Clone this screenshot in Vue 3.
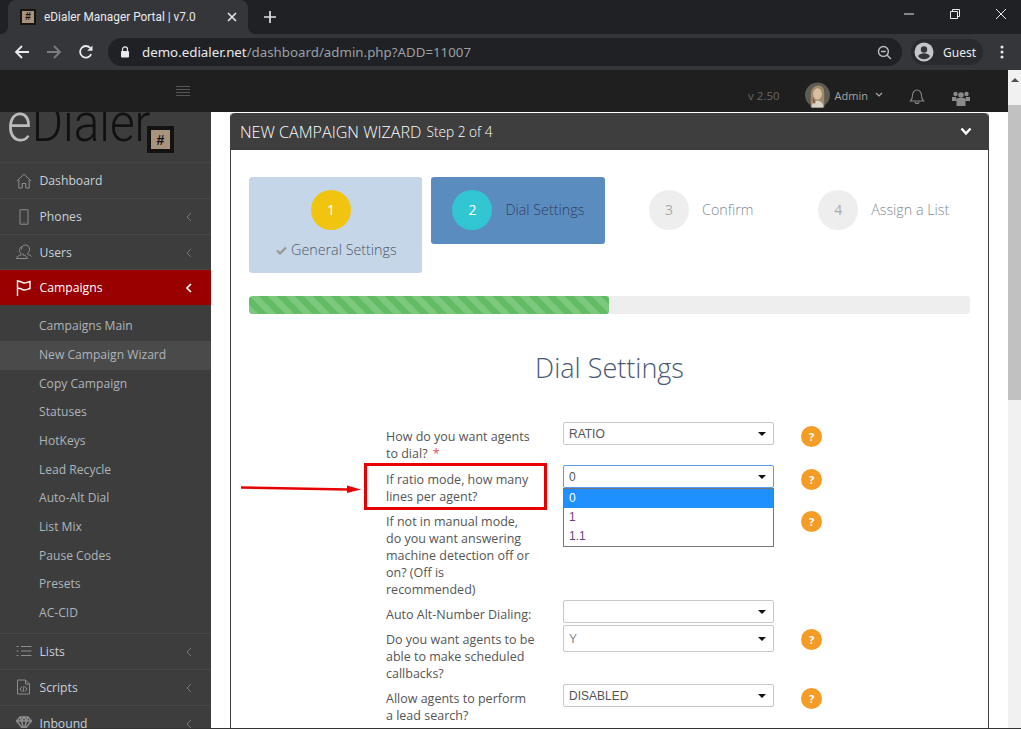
<script setup>
const topItems = [
  { label: 'Dashboard', icon: 'home' },
  { label: 'Phones', icon: 'phone', arrow: true },
  { label: 'Users', icon: 'users', arrow: true, short: true },
];
const subItems = [
  'Campaigns Main',
  'New Campaign Wizard',
  'Copy Campaign',
  'Statuses',
  'HotKeys',
  'Lead Recycle',
  'Auto-Alt Dial',
  'List Mix',
  'Pause Codes',
  'Presets',
  'AC-CID',
];
const bottomItems = [
  { label: 'Lists', icon: 'list' },
  { label: 'Scripts', icon: 'script' },
  { label: 'Inbound', icon: 'diamond' },
];
const steps = [
  { n: 1, label: 'General Settings', state: 'done' },
  { n: 2, label: 'Dial Settings', state: 'active' },
  { n: 3, label: 'Confirm', state: '' },
  { n: 4, label: 'Assign a List', state: '' },
];
const rows = [
  { label: 'How do you want agents to dial?', required: true, value: 'RATIO', help: true, cls: 'h23' },
  { label: 'If ratio mode, how many lines per agent?', value: '0', help: true, open: true, cls: 'h23' },
  { label: 'If not in manual mode, do you want answering machine detection off or on? (Off is recommended)', value: null, help: true },
  { label: 'Auto Alt-Number Dialing:', value: '', cls: 'h23' },
  { label: 'Do you want agents to be able to make scheduled callbacks?', value: 'Y', help: true, cls: 'h27 light' },
  { label: 'Allow agents to perform a lead search?', value: 'DISABLED', help: true, cls: 'h23' },
];
</script>

<template>
  <div class="page">
    <!-- barre navigateur -->
    <div class="tabstrip">
      <div class="tab">
        <span class="favicon">#</span>
        <span class="tab-title">eDialer Manager Portal | v7.0</span>
        <svg class="tab-x" width="10" height="10" viewBox="0 0 10 10"><path d="M1 1l8 8M9 1l-8 8" stroke="#e8eaed" stroke-width="1.6" /></svg>
      </div>
      <svg class="tab-plus" width="14" height="14" viewBox="0 0 14 14"><path d="M7 1v12M1 7h12" stroke="#dee1e6" stroke-width="1.7" /></svg>
      <div class="win-btns">
        <svg width="12" height="12" viewBox="0 0 12 12"><path d="M1 6h10" stroke="#e8eaed" stroke-width="1" /></svg>
        <svg width="12" height="12" viewBox="0 0 12 12"><path d="M1.5 3.5h7v7h-7zM3.5 3.5v-2h7v7h-2" fill="none" stroke="#e8eaed" stroke-width="1" /></svg>
        <svg width="12" height="12" viewBox="0 0 12 12"><path d="M1 1l10 10M11 1L1 11" stroke="#e8eaed" stroke-width="1" /></svg>
      </div>
    </div>
    <div class="toolbar">
      <svg class="tool" width="16" height="16" viewBox="0 0 16 16"><path d="M15 8H2M8 2L2 8l6 6" fill="none" stroke="#e8eaed" stroke-width="1.8" /></svg>
      <svg class="tool" width="16" height="16" viewBox="0 0 16 16"><path d="M1 8h13M8 2l6 6-6 6" fill="none" stroke="#7b7d80" stroke-width="1.8" /></svg>
      <svg class="tool" width="16" height="16" viewBox="0 0 16 16"><path d="M13.2 10.2A5.8 5.8 0 1 1 12.3 4" fill="none" stroke="#e8eaed" stroke-width="1.8" /><path d="M14.5 1.5v5.3H9.2z" fill="#e8eaed" /></svg>
      <div class="urlbar">
        <svg width="10" height="12" viewBox="0 0 10 12"><path d="M2.5 5V3.4a2.5 2.5 0 0 1 5 0V5" fill="none" stroke="#e8eaed" stroke-width="1.2" /><rect x="1" y="5" width="8" height="6.5" rx="1" fill="#e8eaed" /></svg>
        <span class="url"><b>demo.edialer.net</b>/dashboard/admin.php?ADD=11007</span>
        <svg class="zoom-ic" width="15" height="15" viewBox="0 0 14 14"><circle cx="6" cy="6" r="4.6" fill="none" stroke="#bdc1c6" stroke-width="1.3" /><path d="M9.5 9.5L13 13M3.8 6h4.4" stroke="#bdc1c6" stroke-width="1.3" /></svg>
      </div>
      <div class="guest">
        <svg width="20" height="20" viewBox="0 0 20 20"><circle cx="10" cy="10" r="9.5" fill="#c4c7cb" /><circle cx="10" cy="7.5" r="3.2" fill="#35363a" /><path d="M4 14.2c1.2-2.2 3.6-3 6-3s4.8.8 6 3a7.5 7.5 0 0 1-12 0z" fill="#35363a" /></svg>
        <span>Guest</span>
      </div>
      <svg class="dots" width="4" height="14" viewBox="0 0 4 14"><circle cx="2" cy="2" r="1.5" fill="#e8eaed" /><circle cx="2" cy="7" r="1.5" fill="#e8eaed" /><circle cx="2" cy="12" r="1.5" fill="#e8eaed" /></svg>
    </div>

    <div class="viewport">
      <div class="site">
        <!-- barre du haut -->
        <div class="topbar">
          <div class="burger"><i></i><i></i><i></i><i></i></div>
          <span class="version">v 2.50</span>
          <svg class="avatar" width="25" height="26" viewBox="0 0 26 26">
            <circle cx="13" cy="13" r="13" fill="#5e5a54" />
            <path d="M6 26V12c0-6 4-9 8-9s6 3 6 8v15z" fill="#a08a6c" />
            <ellipse cx="13" cy="12" rx="4.5" ry="6" fill="#d9bfa2" />
            <path d="M7 26c0-5 3-7 6-7s6 2 6 7z" fill="#d8d3c4" />
            <path d="M8 15l3 6-2 1z" fill="#7a4a36" />
          </svg>
          <span class="admin">Admin</span>
          <svg class="admin-caret" width="8" height="6" viewBox="0 0 8 6"><path d="M1 1l3 3 3-3" fill="none" stroke="#aaa" stroke-width="1.2" /></svg>
          <svg class="bell" width="16" height="18" viewBox="0 0 16 18"><path d="M1.5 14c1.5-1.5 2-2.5 2-5.500 0-3 2-5.500 4.500-5.500s4.500 2.500 4.500 5.500c0 3 .5 4 2 5.500z" fill="none" stroke="#888" stroke-width="1.1" /><path d="M6 14.500a2 2 0 0 0 4 0" fill="none" stroke="#888" stroke-width="1.1" /></svg>
          <svg class="group" width="18" height="16" viewBox="0 0 18 16"><circle cx="9" cy="5" r="2.800" fill="#8a8a8a" /><circle cx="3.500" cy="4" r="2.200" fill="#8a8a8a" /><circle cx="14.500" cy="4" r="2.200" fill="#8a8a8a" /><path d="M0 7h4l1 4H0zM18 7h-4l-1 4h5z" fill="#8a8a8a" /><path d="M4.500 16V9.500c0-1 1-1.500 2-1.500h5c1 0 2 .5 2 1.500V16z" fill="#8a8a8a" /></svg>
        </div>

        <div class="columns">
          <!-- menu latéral -->
          <aside class="sidebar">
            <div class="logo">
              <span class="logo-text"><em>e</em>Dialer</span>
              <span class="logo-box"><span>#</span></span>
            </div>
            <div v-for="item in topItems" :key="item.label" class="nav-item" :class="{ short: item.short }">
              <svg class="nav-ic" width="16" height="16" viewBox="0 0 16 16" fill="none" stroke="#8d8d8d" stroke-width="1">
                <path v-if="item.icon === 'home'" d="M.8 8L8 1.200 15.200 8M2.800 6.500V15h3.400v-4.500h3.600V15h3.400V6.500" />
                <path v-if="item.icon === 'phone'" d="M4 .8h8v14.400H4zM7.500 13.200h1" />
                <path v-if="item.icon === 'users'" d="M5.500 5.500C5.500 3 7 1 9.500 1s4 2 4 4.500c0 1.500-.8 3-1.800 3.700v1.100c1.500.6 3.300 1.200 3.800 2.200M6 2.500C4 3 3.500 5 3.500 6.500c0 1.300.7 2.500 1.500 3v1.500c-2 .5-4.500 1.500-4.500 3.500h11c0-1.800-2-3-4.500-3.500V9.500" />
              </svg>
              <span>{{ item.label }}</span>
              <svg v-if="item.arrow" class="nav-arrow" width="6" height="10" viewBox="0 0 6 10"><path d="M5 1L1 5l4 4" fill="none" stroke="#777" stroke-width="1" /></svg>
            </div>
            <div class="nav-item active">
              <svg class="nav-ic" width="16" height="16" viewBox="0 0 16 16" fill="none" stroke="#fff" stroke-width="1.400"><path d="M1.500 0v16M1.500 1.500c3-1 4.500 1.500 6.500 1.500 2 0 4-1 6-1.500v7c-2 .5-4 1.500-6 1.500S4.500 7.500 1.500 8.500" /></svg>
              <span>Campaigns</span>
              <svg class="nav-arrow" width="6" height="10" viewBox="0 0 6 10"><path d="M5 1L1 5l4 4" fill="none" stroke="#fff" stroke-width="1.600" /></svg>
            </div>
            <div class="submenu">
              <div v-for="(sub, i) in subItems" :key="sub" class="sub-item" :class="{ current: i === 1 }">{{ sub }}</div>
            </div>
            <div v-for="item in bottomItems" :key="item.label" class="nav-item">
              <svg class="nav-ic" width="16" height="16" viewBox="0 0 16 16" fill="none" stroke="#8d8d8d" stroke-width="1">
                <path v-if="item.icon === 'list'" d="M5 3.500h10.500M5 8h10.500M5 12.500h10.500M.5 3.500h2M.5 8h2M.5 12.500h2" />
                <path v-if="item.icon === 'script'" d="M1.500 1h8l4 4v10h-12zM9.500 1v4h4M6 7.500L4 10l2 2.500M9 7.500l2 2.500-2 2.500M8 7l-1 6" />
                <path v-if="item.icon === 'diamond'" stroke-width="1.500" d="M4 2h8l3.500 4L8 15 .5 6zM.5 6h15M5.500 6L8 15l2.500-9M4 2l1.500 4L8 2l2.500 4L12 2" />
              </svg>
              <span>{{ item.label }}</span>
              <svg class="nav-arrow" width="6" height="10" viewBox="0 0 6 10"><path d="M5 1L1 5l4 4" fill="none" stroke="#777" stroke-width="1" /></svg>
            </div>
          </aside>

          <main class="main">
            <div class="panel">
              <div class="panel-head">
                <span class="panel-title">NEW CAMPAIGN WIZARD</span>
                <span class="panel-step">Step 2 of 4</span>
                <svg class="panel-chevron" width="12" height="9" viewBox="0 0 12 9"><path d="M1.500 1.500L6 6.500l4.500-5" fill="none" stroke="#fff" stroke-width="2.500" /></svg>
              </div>
              <div class="panel-body">
                <div class="steps">
                  <div v-for="s in steps" :key="s.n" class="step" :class="s.state">
                    <div class="step-circle">{{ s.n }}</div>
                    <div class="step-label">
                      <svg v-if="s.state === 'done'" width="11" height="9" viewBox="0 0 11 9"><path d="M1 4.500l3 3 6-6" fill="none" stroke="#999" stroke-width="2.400" /></svg>
                      {{ s.label }}
                    </div>
                  </div>
                </div>

                <div class="progress"><div class="progress-fill" :style="{ width: '49.9%' }"></div></div>

                <h2 class="title">Dial Settings</h2>

                <div class="form">
                  <div v-for="row in rows" :key="row.label" class="row">
                    <div class="row-label">
                      {{ row.label }}
                      <span v-if="row.required" class="req">*</span>
                    </div>
                    <div class="row-field">
                      <div v-if="row.value !== null && !row.open" class="select" :class="row.cls">
                        <span>{{ row.value }}</span><i class="caret"></i>
                      </div>
                      <div v-if="row.open" class="select focus" :class="row.cls">
                        <span>{{ row.value }}</span><i class="caret"></i>
                      </div>
                      <div v-if="row.open" class="dropdown">
                        <div class="opt selected">0</div>
                        <div class="opt">1</div>
                        <div class="opt">1.1</div>
                      </div>
                    </div>
                    <div v-if="row.help" class="help">?</div>
                  </div>
                </div>

                <!-- annotations rouges -->
                <div class="red-box"></div>
                <svg class="red-arrow" width="122" height="12" viewBox="0 0 122 12">
                  <path d="M0 4.500L106 6.500" stroke="#e60000" stroke-width="2.500" />
                  <path d="M106 2.500L120 6.500 106 10z" fill="#e60000" />
                </svg>
              </div>
            </div>
          </main>
        </div>
      </div>

      <div class="scrollbar">
        <div class="scroll-up"></div>
        <div class="scroll-thumb"></div>
      </div>
    </div>
    <div class="edge"></div>
  </div>
</template>

<style>
html, body {
  margin: 0;
  padding: 0;
  background: #fff;
  overflow: hidden;
}
</style>

<style scoped>
.page {
  width: 1021px;
  height: 729px;
  display: flex;
  flex-direction: column;
  overflow: hidden;
  font-family: "Open Sans", sans-serif;
}

/* navigateur */
.tabstrip {
  height: 34px;
  flex: none;
  background: #202124;
  display: flex;
  align-items: center;
}
.tab {
  position: relative;
  width: 240px;
  height: 34px;
  margin-left: 8px;
  background: #35363a;
  border-radius: 8px 8px 0 0;
  display: flex;
  align-items: center;
  box-sizing: border-box;
  padding-left: 12px;
}
.tab::before,
.tab::after {
  content: "";
  position: absolute;
  bottom: 0;
  width: 8px;
  height: 8px;
}
.tab::before {
  left: -8px;
  background: radial-gradient(circle at 0 0, transparent 8px, #35363a 8.5px);
}
.tab::after {
  right: -8px;
  background: radial-gradient(circle at 100% 0, transparent 8px, #35363a 8.5px);
}
.favicon {
  width: 16px;
  height: 16px;
  box-sizing: border-box;
  background: #a8937f;
  border: 2px solid #1a1511;
  color: #111;
  font: bold 10px/12px "Liberation Sans", sans-serif;
  text-align: center;
}
.tab-title {
  margin-left: 8px;
  font-family: Roboto, sans-serif;
  font-size: 11.85px;
  color: #e8eaed;
  white-space: nowrap;
}
.tab-x {
  margin-left: auto;
  margin-right: 11px;
}
.tab-plus {
  margin-left: 15px;
}
.win-btns {
  margin-left: auto;
  display: flex;
  gap: 34px;
  padding-right: 14px;
  margin-top: -6px;
}
.toolbar {
  height: 36px;
  flex: none;
  background: #35363a;
  display: flex;
  align-items: center;
  padding-left: 14px;
  box-sizing: border-box;
}
.tool {
  margin-right: 16px;
}
.urlbar {
  width: 794px;
  height: 28px;
  margin-left: -2px;
  border-radius: 14px;
  background: #202124;
  display: flex;
  align-items: center;
  box-sizing: border-box;
  padding-left: 12px;
}
.url {
  margin-left: 12px;
  font-family: "Noto Sans", sans-serif;
  font-size: 13.3px;
  color: #9aa0a6;
  white-space: nowrap;
}
.url b {
  font-weight: 400;
  color: #e8eaed;
}
.zoom-ic {
  margin-left: auto;
  margin-right: 10px;
}
.guest {
  width: 72px;
  height: 26px;
  margin-left: 9px;
  border-radius: 13px;
  background: #292a2d;
  display: flex;
  align-items: center;
  box-sizing: border-box;
  padding-left: 3px;
  gap: 9px;
  color: #e8eaed;
  font-family: "Noto Sans", sans-serif;
  font-size: 12px;
}
.dots {
  margin-left: 17px;
}

/* page */
.viewport {
  flex: 1;
  min-height: 0;
  display: flex;
}
.site {
  width: 1008px;
  display: flex;
  flex-direction: column;
}
.topbar {
  height: 42px;
  flex: none;
  background: #1f1f1f;
  display: flex;
  align-items: center;
}
.burger {
  margin-left: 176px;
  width: 14px;
  display: flex;
  flex-direction: column;
  gap: 2px;
}
.burger i {
  display: block;
  height: 1px;
  background: #565656;
}
.version {
  margin-left: auto;
  font-size: 11.5px;
  color: #666;
  margin-top: 8px;
}
.avatar {
  margin-left: 25px;
  margin-top: 8px;
}
.admin {
  margin-left: 5px;
  font-size: 11px;
  color: #a5a5a5;
  margin-top: 8px;
}
.admin-caret {
  margin-left: 7px;
  margin-top: 8px;
}
.bell {
  margin-left: 26px;
  margin-top: 10px;
}
.group {
  margin-left: 27px;
  margin-right: 38px;
  margin-top: 13px;
}
.columns {
  flex: 1;
  min-height: 0;
  display: flex;
}

/* menu */
.sidebar {
  width: 211px;
  flex: none;
  background: #3d3d3d;
  overflow: hidden;
}
.logo {
  height: 50px;
  position: relative;
  overflow: hidden;
  border-bottom: 1px solid #464646;
  box-sizing: content-box;
}
.logo-text {
  position: absolute;
  left: 7px;
  top: -17px;
  font-family: Roboto, sans-serif;
  font-weight: 300;
  font-size: 53px;
  line-height: 56px;
  color: #111;
  transform: scaleX(0.9);
  transform-origin: left center;
}
.logo-text em {
  font-style: normal;
  color: #bbb;
}
.logo-box {
  position: absolute;
  left: 147px;
  top: 14px;
  width: 27px;
  height: 27px;
  box-sizing: border-box;
  border: 4px solid #141210;
  background: #a8937f;
  display: flex;
  align-items: center;
  justify-content: center;
  font: bold 14px "Liberation Sans", sans-serif;
  color: #111;
}
.nav-item {
  height: 35px;
  display: flex;
  align-items: center;
  border-bottom: 1px solid #484848;
  font-size: 12.2px;
  color: #c8d0d8;
  position: relative;
  box-sizing: content-box;
}
.nav-item.short {
  height: 34px;
}
.nav-ic {
  margin-left: 16px;
  margin-right: 7.500px;
  flex: none;
}
.nav-arrow {
  position: absolute;
  right: 19px;
  top: 13px;
}
.nav-item.active {
  background: #990000;
  color: #fff;
  border-bottom: 0;
}
.submenu {
  padding: 7.300px 0 4.700px;
  border-bottom: 1px solid #484848;
}
.sub-item {
  height: 28.7px;
  line-height: 28.7px;
  padding-left: 39px;
  font-size: 12.1px;
  color: #aeb4ba;
  white-space: nowrap;
}
.sub-item.current {
  background: #4a4a4a;
}

/* contenu */
.main {
  flex: 1;
  min-width: 0;
  background: #fff;
  padding: 1px 19px 0;
  overflow: hidden;
}
.panel {
  border: 1px solid #3e3e3e;
  border-top: 0;
  border-radius: 4px 4px 0 0;
  background: #fff;
}
.panel-head {
  height: 37px;
  background: #3e3e3e;
  border-radius: 4px 4px 0 0;
  display: flex;
  align-items: center;
  padding-left: 9px;
  color: #fff;
}
.panel-title {
  font-size: 16.1px;
  font-weight: 300;
}
.panel-step {
  margin-left: 5px;
  font-size: 13.7px;
  font-weight: 300;
}
.panel-chevron {
  margin-left: auto;
  margin-right: 16px;
}
.panel-body {
  position: relative;
  padding: 27px 18px 0;
  height: 700px;
}
.steps {
  display: grid;
  grid-template-columns: repeat(4, 173px);
  column-gap: 9.400px;
  height: 96px;
  align-items: start;
}
.step {
  height: 67px;
  box-sizing: border-box;
  padding-top: 13px;
  display: flex;
  justify-content: center;
  gap: 13px;
  border-radius: 3px;
  color: #7f8a96;
}
.step:nth-child(n + 3) {
  padding-left: 2px;
}
.step-circle {
  width: 40px;
  height: 40px;
  border-radius: 50%;
  background: #eee;
  color: #aaa;
  text-align: center;
  font-size: 14px;
  line-height: 40px;
  flex: none;
}
.step-label {
  font-size: 14.3px;
  font-weight: 300;
  line-height: 40px;
  white-space: nowrap;
}
.step.done {
  height: 96px;
  flex-direction: column;
  justify-content: flex-start;
  align-items: center;
  gap: 0;
  background: #c5d6e8;
  color: #4e5866;
}
.step.done .step-label {
  margin-left: 2px;
}
.step.done .step-circle {
  margin-right: 9px;
  background: #f1c40f;
  color: #fff;
}
.step.active {
  background: #5b8cc0;
  color: #33405a;
  margin-right: -1px;
}
.step.active .step-circle {
  background: #32c5d2;
  color: #fff;
}
.progress {
  margin-top: 23px;
  height: 18px;
  background: #eee;
  border-radius: 3px;
  overflow: hidden;
}
.progress-fill {
  height: 100%;
  border-radius: 3px;
  background-color: #62bb65;
  background-image: linear-gradient(45deg, #7cc97e 25%, transparent 25%, transparent 50%, #7cc97e 50%, #7cc97e 75%, transparent 75%, transparent);
  background-size: 18px 18px;
}
.title {
  margin: 36px 0 36px;
  height: 36px;
  font-size: 27px;
  line-height: 36px;
  font-weight: 300;
  color: #4a5a73;
  text-align: center;
}
.form {
  margin-left: 137px;
}
.row {
  display: grid;
  grid-template-columns: 177px 211px 21px;
  column-gap: 0;
  align-items: start;
}
.row-label {
  padding: 6px 27.500px 2px 0;
  font-size: 12.5px;
  line-height: 17px;
  color: #555;
}
.row:first-child .row-label {
  padding-bottom: 3px;
}
.req {
  color: #e7505a;
  margin-left: 2px;
}
.row-field {
  position: relative;
}
.select {
  height: 22px;
  box-sizing: border-box;
  border: 1px solid #c8c8c8;
  border-radius: 2px;
  display: flex;
  align-items: center;
  padding: 0 5px;
  font-family: "Liberation Sans", sans-serif;
  font-size: 12px;
  color: #555;
  background: #fff;
}
.select.h23 {
  height: 23px;
}
.select.h27 {
  height: 27px;
}
.select.light {
  color: #888;
}
.select.focus {
  border-color: #5b9bf0;
}
.caret {
  margin-left: auto;
  margin-right: 2px;
  width: 0;
  height: 0;
  border-left: 4px solid transparent;
  border-right: 4px solid transparent;
  border-top: 4px solid #111;
}
.dropdown {
  position: absolute;
  left: 0;
  right: 0;
  top: 23px;
  z-index: 3;
  height: 59px;
  box-sizing: border-box;
  border: 1px solid #767676;
  background: #fff;
  font-family: "Liberation Sans", sans-serif;
  font-size: 12px;
}
.opt {
  height: 19px;
  line-height: 19px;
  padding-left: 5px;
  color: #6b3f7f;
}
.opt.selected {
  background: #1e90ff;
  color: #fff;
}
.help {
  grid-column: 3;
  margin-left: 27px;
  margin-top: 4px;
  width: 21px;
  height: 21px;
  border-radius: 50%;
  background: #f39c26;
  color: #fff;
  text-align: center;
  font: bold 11px/21px "Open Sans", sans-serif;
}
.red-box {
  position: absolute;
  left: 133px;
  top: 313px;
  width: 183px;
  height: 47px;
  box-sizing: border-box;
  border: 3px solid #e60000;
  z-index: 2;
}
.red-arrow {
  position: absolute;
  left: 10px;
  top: 333px;
  z-index: 2;
}

/* barre de défilement */
.scrollbar {
  width: 13px;
  flex: none;
  background: #f1f1f1;
}
.scroll-up {
  width: 0;
  height: 0;
  margin: 8px auto 0;
  border-left: 4px solid transparent;
  border-right: 4px solid transparent;
  border-bottom: 4px solid #505050;
}
.scroll-thumb {
  margin-top: 23px;
  height: 295px;
  background: #c1c1c1;
}
.edge {
  height: 1px;
  flex: none;
  background: #333;
}
</style>
